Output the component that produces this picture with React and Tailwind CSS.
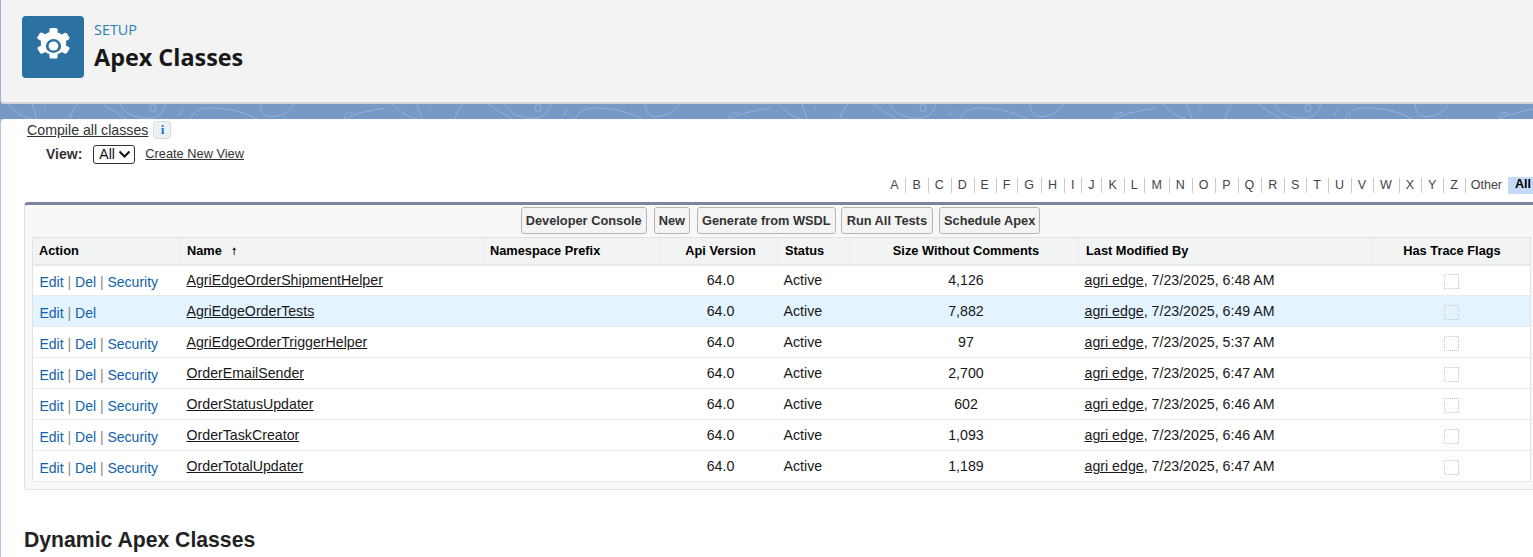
const ROWS = [
  { name: "AgriEdgeOrderShipmentHelper", size: "4,126", date: "7/23/2025, 6:48 AM", security: true },
  { name: "AgriEdgeOrderTests", size: "7,882", date: "7/23/2025, 6:49 AM", security: false, hover: true },
  { name: "AgriEdgeOrderTriggerHelper", size: "97", date: "7/23/2025, 5:37 AM", security: true },
  { name: "OrderEmailSender", size: "2,700", date: "7/23/2025, 6:47 AM", security: true },
  { name: "OrderStatusUpdater", size: "602", date: "7/23/2025, 6:46 AM", security: true },
  { name: "OrderTaskCreator", size: "1,093", date: "7/23/2025, 6:46 AM", security: true },
  { name: "OrderTotalUpdater", size: "1,189", date: "7/23/2025, 6:47 AM", security: true },
];

const LETTERS = "ABCDEFGHIJKLMNOPQRSTUVWXYZ".split("");
const BUTTONS = [
  { label: "Developer Console", className: "px-[4px]" },
  { label: "New", className: "ml-[7px] px-[4px]" },
  { label: "Generate from WSDL", className: "ml-[7px] px-[4px]" },
  { label: "Run All Tests", className: "ml-[5px] px-[5px]" },
  { label: "Schedule Apex", className: "ml-[6px] px-[4px]" },
];

const BandPattern = () => (
  <svg className="h-full w-full" xmlns="http://www.w3.org/2000/svg">
    <defs>
      <pattern id="band" width="385" height="15" patternUnits="userSpaceOnUse">
        <g fill="none" stroke="#93b1d6" strokeWidth="1">
          <path d="M8 0c7 8 17 14 24 15" />
          <path d="M32 0l5 15" />
          <path d="M45 3v4" />
          <path d="M70 15c1-6 4-11 8-15" />
          <path d="M103 0c8 6 17 11 24 15" />
          <path d="M120 0c4 10 16 15 30 14 10 0 14-8 16-14" />
          <ellipse cx="153" cy="4" rx="3" ry="4" />
          <path d="M178 12l5-7" />
          <path d="M190 15c4-8 10-11 20-11 14 0 30 2 47 11" />
          <path d="M260 0c1 12 8 14 16 12 8-1 14-6 18-12" />
          <path d="M345 15c10-6 30-10 52-12" />
          <path d="M345 15c-2-3 1-7 8-6" />
        </g>
      </pattern>
    </defs>
    <rect width="100%" height="100%" fill="url(#band)" />
  </svg>
);

const GearIcon = () => (
  <svg width="33" height="36" viewBox="3 0 28 34" preserveAspectRatio="none" fill="none">
    <path
      fill="#fff"
      fillRule="evenodd"
      d="M13.5 1.5c0-.8.7-1.5 1.5-1.5h4c.8 0 1.5.7 1.5 1.5v2.7c1.3.4 2.5 1.1 3.5 2l2.4-1.4c.7-.4 1.6-.2 2 .5l2 3.5c.4.7.2 1.6-.5 2l-2.4 1.4c.3 1.4.3 2.8 0 4.2v.2l2.4 1.4c.7.4 1 1.3.5 2l-2 3.5c-.4.7-1.3 1-2 .5l-2.4-1.4c-1 .9-2.2 1.6-3.5 2v2.8c0 .8-.7 1.5-1.5 1.5h-4c-.8 0-1.5-.7-1.5-1.5v-2.8c-1.3-.4-2.5-1.1-3.5-2l-2.4 1.4c-.7.4-1.6.2-2-.5l-2-3.5c-.4-.7-.2-1.6.5-2l2.4-1.4c-.3-1.4-.3-2.9 0-4.3L3.9 10.5c-.7-.4-1-1.3-.5-2l2-3.5c.4-.7 1.3-1 2-.5l2.6 1.5c1-.9 2.2-1.6 3.5-2V1.5ZM17 10.5a6.5 6.5 0 1 0 0 13 6.5 6.5 0 0 0 0-13Z"
    />
    <circle cx="17" cy="17" r="4.2" fill="#fff" />
  </svg>
);

const Th = ({ children, className = "" }) => (
  <th className={`h-[27px] border-b-2 border-r border-[#e6e8e9] bg-[#f2f3f3] py-0 text-[12.8px] font-bold text-[#000] ${className}`}>
    {children}
  </th>
);

const TraceBox = () => (
  <div className="mx-auto h-[15px] w-[15px] rounded-[1px] border border-dotted border-[#c6c6c6]" />
);

const App = () => {
  return (
    <div className="h-[557px] w-[1533px] overflow-hidden bg-[#a9c4e8] font-['Liberation_Sans',Arial,sans-serif] text-[13px] text-[#181818]">
      {/* page header */}
      <div className="relative bg-[#7699c6]">
        <div className="flex h-[104px] items-start rounded-bl-[4px] border-b-2 border-l border-[#d4d4d4] border-l-[#9fb4d0] bg-[#f3f3f3] pl-[21px] pt-[16px]">
          <div className="flex h-[62px] w-[62px] items-center justify-center rounded-[4px] bg-[#2b72a3] pb-[2px]">
            <GearIcon />
          </div>
          <div className="ml-[10px] flex flex-col font-['Open_Sans',sans-serif]">
            <span className="mt-[4px] text-[14.4px] leading-[20px] text-[#2f7fb3]">SETUP</span>
            <span className="mt-[1px] text-[23.4px] font-bold leading-[32px] text-[#181818]">Apex Classes</span>
          </div>
        </div>
        <div className="h-[15px]">
          <BandPattern />
        </div>
      </div>

      {/* body */}
      <div className="ml-[1px] h-[438px] overflow-hidden rounded-tl-[4px] bg-white">
        <div className="flex h-[21px] items-center pl-[26px] pt-[1px]">
          <a className="text-[14.2px] leading-none text-[#333] underline">Compile all classes</a>
          <span className="ml-[5px] flex h-[18px] w-[18px] items-center justify-center rounded-[3px] border border-[#d4dadd] bg-[#eef1f4] font-['Liberation_Serif',serif] text-[13px] font-bold text-[#1b6fd1]">
            i
          </span>
        </div>

        <div className="mt-[4px] flex h-[20px] items-center pl-[45px]">
          <span className="text-[14px] font-bold text-[#333]">View:</span>
          <div className="ml-[11px] flex h-[19px] w-[42px] items-center rounded-[3px] border border-[#333] bg-white pl-[5px] text-[14px] text-[#111]">
            All
            <svg className="ml-[3px]" width="13" height="8" viewBox="0 0 13 8" fill="none">
              <path d="M1.5 1.5 6.5 6.5l5-5" stroke="#111" strokeWidth="2" />
            </svg>
          </div>
          <a className="ml-[10px] text-[12.8px] text-[#333] underline">Create New View</a>
        </div>

        {/* alpha filter */}
        <div className="mt-[13px] flex h-[17px] items-center justify-end whitespace-nowrap text-[12.5px] leading-[15px] text-[#444]">
          {LETTERS.map((l) => (
            <span key={l} className="border-r border-[#c9c9c9] pl-[6px] pr-[6.9px]">
              {l}
            </span>
          ))}
          <span className="pl-[5px] pr-[6px]">Other</span>
          <span className="w-[25px] self-stretch overflow-hidden bg-[#c3dbf7] pl-[7px] font-bold text-[#000]">All</span>
        </div>

        {/* list panel */}
        <div className="ml-[23px] mt-[8px] h-[288px] w-[1513px] rounded-[4px] border border-t-[3px] border-[#e0e3e5] border-t-[#7a85a3] bg-[#f8f8f8]">
          <div className="flex h-[32px] items-start justify-center pt-[2px]">
            {BUTTONS.map((b) => (
              <button
                key={b.label}
                className={`h-[27px] rounded-[3px] border border-[#b5b5b5] bg-[#f4f4f4] text-[12.8px] font-bold text-[#333] ${b.className}`}
              >
                {b.label}
              </button>
            ))}
          </div>
          <table className="ml-[7px] w-[1498px] table-fixed border-collapse border border-[#e0e3e5] bg-white text-[13px]">
            <colgroup>
              <col className="w-[148px]" />
              <col className="w-[303px]" />
              <col className="w-[176px]" />
              <col className="w-[118px]" />
              <col className="w-[72px]" />
              <col className="w-[229px]" />
              <col className="w-[293px]" />
              <col className="w-[159px]" />
            </colgroup>
            <thead>
              <tr>
                <Th className="px-[6px] text-left">Action</Th>
                <Th className="px-[6px] text-left">
                  Name <span className="ml-[7px] text-[10px] font-normal">🠕</span>
                </Th>
                <Th className="px-[6px] text-left">Namespace Prefix</Th>
                <Th className="pl-[4px] text-center">Api Version</Th>
                <Th className="pl-[7px] text-left">Status</Th>
                <Th className="pl-[4px] text-center">Size Without Comments</Th>
                <Th className="pl-[7px] text-left">Last Modified By</Th>
                <Th className="border-r-0 pl-[2px] text-center">Has Trace Flags</Th>
              </tr>
            </thead>
            <tbody>
              {ROWS.map((r) => (
                <tr key={r.name} className={`h-[31px] border-b border-[#e9eaea] ${r.hover ? "bg-[#e3f3ff]" : "bg-white"}`}>
                  <td className="px-[6.5px] pt-[4px] text-[14px] text-[#0f62ab]">
                    Edit <span className="text-[#8a8a8a]">|</span> Del
                    {r.security && (
                      <>
                        {" "}
                        <span className="text-[#8a8a8a]">|</span> Security
                      </>
                    )}
                  </td>
                  <td className="pl-[6px] pt-[1px] text-[14.2px] text-[#181818]">
                    <a className="underline">{r.name}</a>
                  </td>
                  <td />
                  <td className="pl-[4px] pt-[1px] text-center text-[14.2px]">64.0</td>
                  <td className="pl-[6px] pt-[1px] text-[14.2px]">Active</td>
                  <td className="pl-[4px] pt-[1px] text-center text-[14.2px]">{r.size}</td>
                  <td className="pl-[6px] pt-[1px] text-[14.2px]">
                    <a className="underline">agri edge</a>, {r.date}
                  </td>
                  <td className="pl-[2px] pt-[2px]">
                    <TraceBox />
                  </td>
                </tr>
              ))}
            </tbody>
          </table>
        </div>

        <h2 className="ml-[23px] mt-[37px] text-[21.2px] font-bold leading-[26px] text-[#222]">Dynamic Apex Classes</h2>
      </div>
    </div>
  );
};

export default App;
